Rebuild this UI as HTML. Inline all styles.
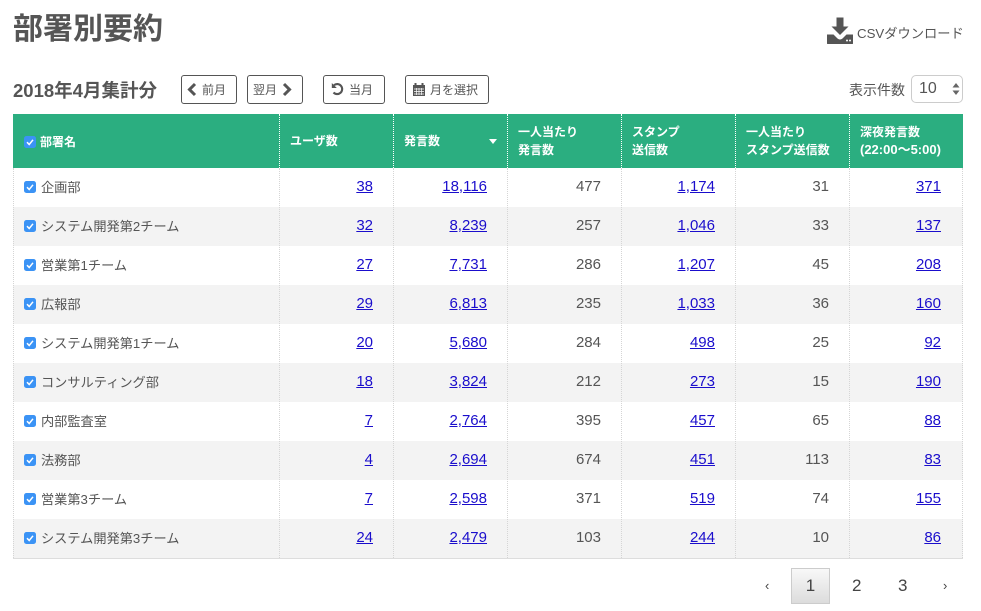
<!DOCTYPE html>
<html lang="ja"><head><meta charset="utf-8">
<style>
html,body{margin:0;padding:0;background:#fff}
body{width:981px;height:611px;position:relative;overflow:hidden;color:#555;font-family:"Liberation Sans","Noto Sans CJK JP",sans-serif}
.a{position:absolute;white-space:nowrap}
h1{position:absolute;margin:0;left:13px;top:10px;font-size:30px;line-height:40px;font-weight:700;color:#555}
.btn{position:absolute;top:75px;height:29px;box-sizing:border-box;border:1px solid #555;border-radius:3px;background:#fff;font-size:12px;line-height:28px;color:#555;white-space:nowrap}
.btn svg{position:absolute}
.btn span{position:absolute;top:0}
.hd{position:absolute;top:114px;height:54px;background:#2bae80;left:13px;width:950px}
.th{position:absolute;color:#fff;font-size:12px;font-weight:700;line-height:18px;white-space:nowrap}
.th small{font-size:13px;font-weight:700}
.vd{position:absolute;top:114px;width:0;height:54px;border-left:1px dotted #fff}
.vr{position:absolute;top:168px;width:0;height:390px;border-left:1px dotted #d5d5d5}
.row{position:absolute;left:13px;width:950px;height:39px}
.row.e{background:#f3f3f3}
.n{position:absolute;font-size:13.200px;color:#555;line-height:20px;left:28px;top:10px;white-space:nowrap}
.cb{position:absolute;left:11px;top:13px;width:12px;height:12px;background:#3b93f5;border-radius:2.5px}
.cb svg{position:absolute;left:0;top:0}
.v{position:absolute;top:9px;font-size:15px;line-height:20px;text-align:right;width:80px;color:#555}
.v a{color:#1a0dcc;text-decoration:underline}
.pg{position:absolute;font-size:17px;color:#444;line-height:20px;top:576px}
</style></head><body>
<h1>部署別要約</h1>

<svg class="a" style="left:827px;top:17px" width="26" height="27" viewBox="0 0 26 27"><path d="M9.500 0.500h7v9h5L13 18 4.500 9.500h5z" fill="#555"/><path d="M0 17.500h6.500L10.500 21.500q2.500 2 5 0l4-4H26V26.500q0 .5-.5.5H.5q-.5 0-.5-.5z" fill="#555"/><circle cx="20" cy="23.500" r="1" fill="#fff"/><circle cx="23" cy="23.500" r="1" fill="#fff"/></svg>
<div class="a" style="left:857px;top:25px;font-size:13.250px;line-height:18px;color:#555">CSVダウンロード</div>

<div class="a" style="left:13px;top:79px;font-size:18.500px;line-height:24px;font-weight:700;color:#555">2018年4月集計分</div>

<div class="btn" style="left:181px;width:56px"><svg style="left:4px;top:6px" width="12" height="15" viewBox="0 0 12 15"><path d="M9 2L3.500 7.500l5.500 5.500" fill="none" stroke="#555" stroke-width="3"/></svg><span style="left:20px">前月</span></div>
<div class="btn" style="left:247px;width:56px"><span style="left:5px">翌月</span><svg style="left:33px;top:6px" width="12" height="15" viewBox="0 0 12 15"><path d="M3 2l5.500 5.500L3 13" fill="none" stroke="#555" stroke-width="3"/></svg></div>
<div class="btn" style="left:323px;width:62px"><svg style="left:6px;top:6px" width="15" height="15" viewBox="0 0 15 15"><path d="M4 3.200A5 5 0 1 1 3.500 10.500" fill="none" stroke="#555" stroke-width="2.100"/><path d="M1.800 1v5h5z" fill="#555"/></svg><span style="left:25px">当月</span></div>
<div class="btn" style="left:405px;width:84px"><svg style="left:6px;top:6px" width="14" height="15" viewBox="0 0 14 15"><path d="M1 3h12v11H1z" fill="#555"/><path d="M3.500 1v3M10.500 1v3" stroke="#555" stroke-width="2"/><path d="M2 7h10M2 9.500h10M2 12h10" stroke="#fff" stroke-width=".7"/><path d="M4.500 6v7M7 6v7M9.500 6v7" stroke="#fff" stroke-width=".7"/></svg><span style="left:24px">月を選択</span></div>

<div class="a" style="left:849px;top:80px;font-size:14px;line-height:20px;color:#555">表示件数</div>
<div class="a" style="left:911px;top:75px;width:52px;height:28px;box-sizing:border-box;border:1px solid #ccc;border-radius:5px;background:#fff">
<div class="a" style="left:7px;top:3px;font-size:16px;line-height:20px;color:#555">10</div>
<svg class="a" style="left:40px;top:7px" width="8" height="12" viewBox="0 0 8 12"><path d="M4 0l3.500 4.500H.5zM4 12L.5 7.500h7z" fill="#666"/></svg></div>

<div class="hd"></div>
<div class="a" style="left:24px;top:136px;width:12px;height:12px;background:#3b93f5;border-radius:2.500px"><svg class="a" style="left:0;top:0" width="12" height="12" viewBox="0 0 12 12"><path d="M3 6.200l2.200 2.300L9 3.800" fill="none" stroke="#fff" stroke-width="1.500"/></svg></div>
<div class="th" style="left:40px;top:133px">部署名</div>
<div class="th" style="left:290px;top:132px">ユーザ数</div>
<div class="th" style="left:404px;top:132px">発言数</div>
<svg class="a" style="left:489px;top:139px" width="8" height="5" viewBox="0 0 8 5"><path d="M0 0h8L4 5z" fill="#fff"/></svg>
<div class="th" style="left:518px;top:123px">一人当たり<br>発言数</div>
<div class="th" style="left:632px;top:123px">スタンプ<br>送信数</div>
<div class="th" style="left:746px;top:123px">一人当たり<br>スタンプ送信数</div>
<div class="th" style="left:860px;top:123px">深夜発言数<br><small>(22:00〜5:00)</small></div>

<div class="row" style="top:168px"><i class="cb"><svg width="12" height="12" viewBox="0 0 12 12"><path d="M3 6.200l2.200 2.300L9 3.800" fill="none" stroke="#fff" stroke-width="1.500"/></svg></i><div class="n">企画部</div>
<div class="v" style="left:280px"><a>38</a></div><div class="v" style="left:394px"><a>18,116</a></div><div class="v" style="left:508px">477</div><div class="v" style="left:622px"><a>1,174</a></div><div class="v" style="left:736px">31</div><div class="v" style="left:848px"><a>371</a></div></div>
<div class="row e" style="top:207px"><i class="cb"><svg width="12" height="12" viewBox="0 0 12 12"><path d="M3 6.200l2.200 2.300L9 3.800" fill="none" stroke="#fff" stroke-width="1.500"/></svg></i><div class="n">システム開発第2チーム</div>
<div class="v" style="left:280px"><a>32</a></div><div class="v" style="left:394px"><a>8,239</a></div><div class="v" style="left:508px">257</div><div class="v" style="left:622px"><a>1,046</a></div><div class="v" style="left:736px">33</div><div class="v" style="left:848px"><a>137</a></div></div>
<div class="row" style="top:246px"><i class="cb"><svg width="12" height="12" viewBox="0 0 12 12"><path d="M3 6.200l2.200 2.300L9 3.800" fill="none" stroke="#fff" stroke-width="1.500"/></svg></i><div class="n">営業第1チーム</div>
<div class="v" style="left:280px"><a>27</a></div><div class="v" style="left:394px"><a>7,731</a></div><div class="v" style="left:508px">286</div><div class="v" style="left:622px"><a>1,207</a></div><div class="v" style="left:736px">45</div><div class="v" style="left:848px"><a>208</a></div></div>
<div class="row e" style="top:285px"><i class="cb"><svg width="12" height="12" viewBox="0 0 12 12"><path d="M3 6.200l2.200 2.300L9 3.800" fill="none" stroke="#fff" stroke-width="1.500"/></svg></i><div class="n">広報部</div>
<div class="v" style="left:280px"><a>29</a></div><div class="v" style="left:394px"><a>6,813</a></div><div class="v" style="left:508px">235</div><div class="v" style="left:622px"><a>1,033</a></div><div class="v" style="left:736px">36</div><div class="v" style="left:848px"><a>160</a></div></div>
<div class="row" style="top:324px"><i class="cb"><svg width="12" height="12" viewBox="0 0 12 12"><path d="M3 6.200l2.200 2.300L9 3.800" fill="none" stroke="#fff" stroke-width="1.500"/></svg></i><div class="n">システム開発第1チーム</div>
<div class="v" style="left:280px"><a>20</a></div><div class="v" style="left:394px"><a>5,680</a></div><div class="v" style="left:508px">284</div><div class="v" style="left:622px"><a>498</a></div><div class="v" style="left:736px">25</div><div class="v" style="left:848px"><a>92</a></div></div>
<div class="row e" style="top:363px"><i class="cb"><svg width="12" height="12" viewBox="0 0 12 12"><path d="M3 6.200l2.200 2.300L9 3.800" fill="none" stroke="#fff" stroke-width="1.500"/></svg></i><div class="n">コンサルティング部</div>
<div class="v" style="left:280px"><a>18</a></div><div class="v" style="left:394px"><a>3,824</a></div><div class="v" style="left:508px">212</div><div class="v" style="left:622px"><a>273</a></div><div class="v" style="left:736px">15</div><div class="v" style="left:848px"><a>190</a></div></div>
<div class="row" style="top:402px"><i class="cb"><svg width="12" height="12" viewBox="0 0 12 12"><path d="M3 6.200l2.200 2.300L9 3.800" fill="none" stroke="#fff" stroke-width="1.500"/></svg></i><div class="n">内部監査室</div>
<div class="v" style="left:280px"><a>7</a></div><div class="v" style="left:394px"><a>2,764</a></div><div class="v" style="left:508px">395</div><div class="v" style="left:622px"><a>457</a></div><div class="v" style="left:736px">65</div><div class="v" style="left:848px"><a>88</a></div></div>
<div class="row e" style="top:441px"><i class="cb"><svg width="12" height="12" viewBox="0 0 12 12"><path d="M3 6.200l2.200 2.300L9 3.800" fill="none" stroke="#fff" stroke-width="1.500"/></svg></i><div class="n">法務部</div>
<div class="v" style="left:280px"><a>4</a></div><div class="v" style="left:394px"><a>2,694</a></div><div class="v" style="left:508px">674</div><div class="v" style="left:622px"><a>451</a></div><div class="v" style="left:736px">113</div><div class="v" style="left:848px"><a>83</a></div></div>
<div class="row" style="top:480px"><i class="cb"><svg width="12" height="12" viewBox="0 0 12 12"><path d="M3 6.200l2.200 2.300L9 3.800" fill="none" stroke="#fff" stroke-width="1.500"/></svg></i><div class="n">営業第3チーム</div>
<div class="v" style="left:280px"><a>7</a></div><div class="v" style="left:394px"><a>2,598</a></div><div class="v" style="left:508px">371</div><div class="v" style="left:622px"><a>519</a></div><div class="v" style="left:736px">74</div><div class="v" style="left:848px"><a>155</a></div></div>
<div class="row e" style="top:519px"><i class="cb"><svg width="12" height="12" viewBox="0 0 12 12"><path d="M3 6.200l2.200 2.300L9 3.800" fill="none" stroke="#fff" stroke-width="1.500"/></svg></i><div class="n">システム開発第3チーム</div>
<div class="v" style="left:280px"><a>24</a></div><div class="v" style="left:394px"><a>2,479</a></div><div class="v" style="left:508px">103</div><div class="v" style="left:622px"><a>244</a></div><div class="v" style="left:736px">10</div><div class="v" style="left:848px"><a>86</a></div></div>

<div class="vd" style="left:279px"></div><div class="vd" style="left:393px"></div><div class="vd" style="left:507px"></div><div class="vd" style="left:621px"></div><div class="vd" style="left:735px"></div><div class="vd" style="left:849px"></div>
<div class="vr" style="left:13px"></div><div class="vr" style="left:279px"></div><div class="vr" style="left:393px"></div><div class="vr" style="left:507px"></div><div class="vr" style="left:621px"></div><div class="vr" style="left:735px"></div><div class="vr" style="left:849px"></div><div class="vr" style="left:962px"></div>
<div class="a" style="left:13px;top:558px;width:950px;height:1px;background:#ddd"></div>

<div class="pg" style="left:765px;font-size:13px;top:576px">‹</div>
<div class="a" style="left:791px;top:568px;width:39px;height:36px;box-sizing:border-box;border:1px solid #ccc;background:linear-gradient(#f8f8f8,#dcdcdc);text-align:center;font-size:17px;line-height:34px;color:#444">1</div>
<div class="pg" style="left:852px">2</div>
<div class="pg" style="left:898px">3</div>
<div class="pg" style="left:943px;font-size:13px">›</div>
</body></html>
